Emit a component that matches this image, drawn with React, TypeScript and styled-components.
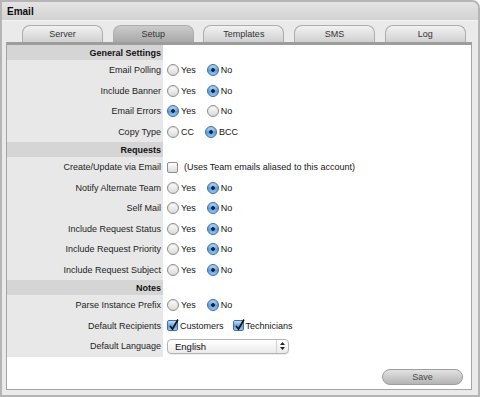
import React from "react";
import styled, { createGlobalStyle } from "styled-components";

const GlobalStyle = createGlobalStyle`
  html, body {
    margin: 0;
    padding: 0;
    background: #fff;
  }

  body {
    font-family: "Liberation Sans", Arial, sans-serif;
  }
`;

const Window = styled.div`
  box-sizing: border-box;
  width: 480px;
  height: 397px;
  border: 2px solid #b5b5b5;
  border-top-right-radius: 8px;
  background: #eaeaea;
  display: flex;
  flex-direction: column;
  overflow: hidden;
`;

const TitleBar = styled.div`
  height: 18px;
  padding-left: 5px;
  display: flex;
  align-items: center;
  background: linear-gradient(#e4e4e4, #d2d2d2);
  border-bottom: 1px solid #f4f4f4;
  font-size: 10px;
  font-weight: bold;
  color: #0c0c0c;
`;

const TabBar = styled.div`
  display: flex;
  gap: 9.7px;
  padding: 4px 0 0 20px;
`;

const Tab = styled.div<{ $active?: boolean }>`
  box-sizing: border-box;
  width: 81px;
  height: 17px;
  border: 1px solid #adadad;
  border-bottom: none;
  border-radius: 8px 8px 0 0;
  background: ${(p) =>
    p.$active
      ? "linear-gradient(#cbcbcb, #a9a9a9)"
      : "linear-gradient(#f2f2f2, #d0d0d0)"};
  display: flex;
  align-items: center;
  justify-content: center;
  font-size: 9px;
  color: #333;
`;

const Panel = styled.div`
  flex: 1;
  margin: 0 6px 5px 4px;
  background: #fff;
  border: 1px solid #a4a4a4;
  border-top: 3px solid #9d9d9d;
  display: flex;
  flex-direction: column;
`;

const Form = styled.div`
  display: grid;
  grid-template-columns: 156px 1fr;
`;

const Label = styled.div<{ $header?: boolean }>`
  height: ${(p) => (p.$header ? "15px" : "20.5px")};
  padding-right: 2px;
  display: flex;
  align-items: center;
  justify-content: flex-end;
  background: ${(p) => (p.$header ? "#d5d5d5" : "#e8e8e8")};
  font-size: 9px;
  font-weight: ${(p) => (p.$header ? "bold" : "normal")};
  color: ${(p) => (p.$header ? "#111" : "#1c1c1c")};
  white-space: nowrap;
`;

const Field = styled.div<{ $gap?: number }>`
  padding-left: 4px;
  display: flex;
  align-items: center;
  gap: ${(p) => p.$gap ?? 11}px;
  font-size: 9px;
  color: #151515;
  white-space: nowrap;
`;

const Option = styled.label`
  display: flex;
  align-items: center;
  gap: 2px;
`;

const Radio = styled.span<{ $on?: boolean }>`
  box-sizing: border-box;
  width: 12px;
  height: 12px;
  border-radius: 50%;
  border: 1px solid ${(p) => (p.$on ? "#3d6c9f" : "#8e8e8e")};
  background: ${(p) =>
    p.$on
      ? "radial-gradient(circle, #14243c 0 1.5px, transparent 2.2px), linear-gradient(#c3e2fa, #5d9fe2 55%, #93c8f3)"
      : "linear-gradient(#fefefe, #d9d9d9)"};
  box-shadow: inset 0 1px 1px rgba(0, 0, 0, 0.12);
`;

const Check = styled.span<{ $on?: boolean }>`
  position: relative;
  box-sizing: border-box;
  width: 11px;
  height: 11px;
  border-radius: 2px;
  border: 1px solid ${(p) => (p.$on ? "#4470a0" : "#8e8e8e")};
  background: ${(p) =>
    p.$on
      ? "linear-gradient(#c3e2fa, #5d9fe2 55%, #93c8f3)"
      : "linear-gradient(#fefefe, #dcdcdc)"};

  svg {
    position: absolute;
    left: 0;
    top: -3px;
  }
`;

const Note = styled.span`
  margin-left: 4px;
`;

const Select = styled.div`
  box-sizing: border-box;
  width: 122px;
  height: 15px;
  border: 1px solid #b3b3b3;
  border-radius: 4px;
  background: linear-gradient(#ffffff, #ebebeb);
  box-shadow: 0 1px 1px rgba(0, 0, 0, 0.08);
  display: flex;
  align-items: center;
  font-size: 9.5px;
  color: #111;
`;

const SelectText = styled.span`
  flex: 1;
  padding-left: 7px;
`;

const SelectArrows = styled.span`
  width: 11px;
  height: 100%;
  border-left: 1px solid #d2d2d2;
  display: flex;
  align-items: center;
  justify-content: center;
`;

const Footer = styled.div`
  margin-top: auto;
  display: flex;
  justify-content: flex-end;
  padding: 0 8px 4px 0;
`;

const SaveButton = styled.button`
  width: 81px;
  height: 16px;
  padding: 0;
  border-radius: 8px;
  border: 1px solid #9d9d9d;
  background: linear-gradient(#e2e2e2, #b4b4b4);
  font-family: "Liberation Sans", Arial, sans-serif;
  font-size: 9px;
  color: #4a4a4a;
`;

const CheckMark = () => (
  <svg width="12" height="13" viewBox="0 0 12 13">
    <path d="M2 8 L4.5 11 L10 1.5" fill="none" stroke="#111" strokeWidth="1.6" />
  </svg>
);

type Choice = { text: string; on?: boolean };

const yesNo = (yes: boolean): Choice[] => [
  { text: "Yes", on: yes },
  { text: "No", on: !yes },
];

const RadioGroup: React.FC<{ choices: Choice[] }> = ({ choices }) => (
  <Field>
    {choices.map((c) => (
      <Option key={c.text}>
        <Radio $on={c.on} />
        {c.text}
      </Option>
    ))}
  </Field>
);

const Header: React.FC<{ title: string }> = ({ title }) => (
  <>
    <Label $header>{title}</Label>
    <Field />
  </>
);

const tabs = ["Server", "Setup", "Templates", "SMS", "Log"];

const requestRows: [string, boolean][] = [
  ["Notify Alternate Team", false],
  ["Self Mail", false],
  ["Include Request Status", false],
  ["Include Request Priority", false],
  ["Include Request Subject", false],
];

export default function App() {
  return (
    <>
      <GlobalStyle />
      <Window>
        <TitleBar>Email</TitleBar>
        <TabBar>
          {tabs.map((t) => (
            <Tab key={t} $active={t === "Setup"}>
              {t}
            </Tab>
          ))}
        </TabBar>
        <Panel>
          <Form>
            <Header title="General Settings" />
            <Label>Email Polling</Label>
            <RadioGroup choices={yesNo(false)} />
            <Label>Include Banner</Label>
            <RadioGroup choices={yesNo(false)} />
            <Label>Email Errors</Label>
            <RadioGroup choices={yesNo(true)} />
            <Label>Copy Type</Label>
            <RadioGroup
              choices={[
                { text: "CC", on: false },
                { text: "BCC", on: true },
              ]}
            />

            <Header title="Requests" />
            <Label>Create/Update via Email</Label>
            <Field>
              <Option>
                <Check />
                <Note>(Uses Team emails aliased to this account)</Note>
              </Option>
            </Field>
            {requestRows.map(([label, yes]) => (
              <React.Fragment key={label}>
                <Label>{label}</Label>
                <RadioGroup choices={yesNo(yes)} />
              </React.Fragment>
            ))}

            <Header title="Notes" />
            <Label>Parse Instance Prefix</Label>
            <RadioGroup choices={yesNo(false)} />
            <Label>Default Recipients</Label>
            <Field $gap={9}>
              <Option>
                <Check $on>
                  <CheckMark />
                </Check>
                Customers
              </Option>
              <Option>
                <Check $on>
                  <CheckMark />
                </Check>
                Technicians
              </Option>
            </Field>
            <Label>Default Language</Label>
            <Field>
              <Select>
                <SelectText>English</SelectText>
                <SelectArrows>
                  <svg width="5" height="8" viewBox="0 0 5 8">
                    <path d="M0 3 L2.5 0 L5 3 Z M0 5 L2.5 8 L5 5 Z" fill="#222" />
                  </svg>
                </SelectArrows>
              </Select>
            </Field>
          </Form>
          <Footer>
            <SaveButton>Save</SaveButton>
          </Footer>
        </Panel>
      </Window>
    </>
  );
}
